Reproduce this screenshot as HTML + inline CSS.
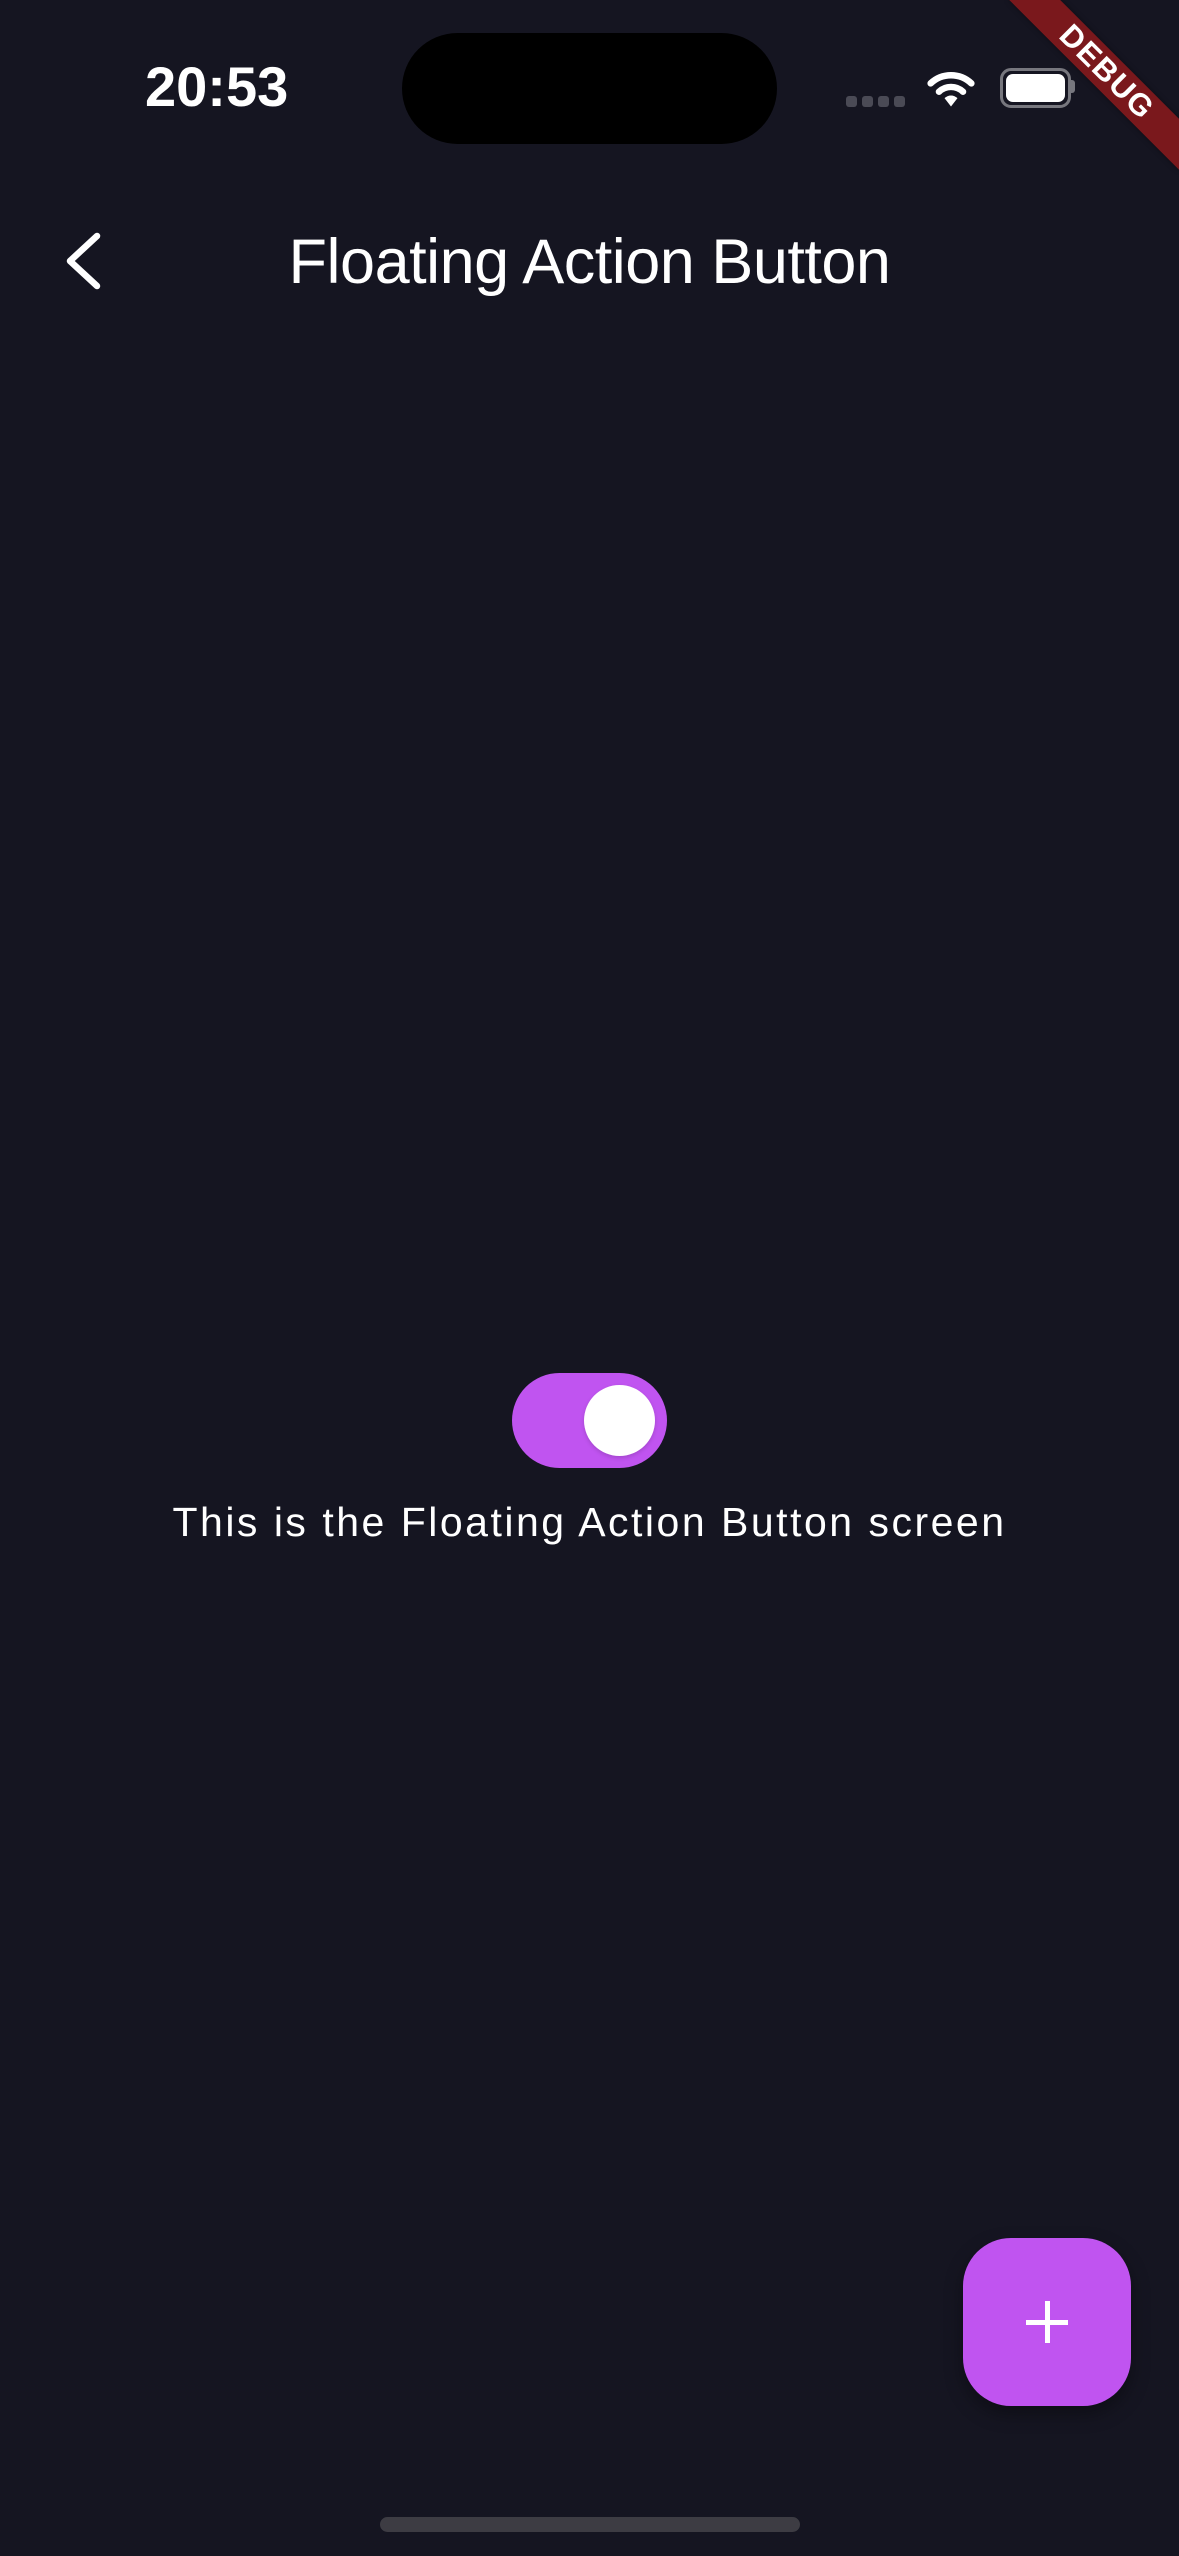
<!DOCTYPE html>
<html><head><meta charset="utf-8">
<style>
html,body{margin:0;padding:0;}
body{width:1179px;height:2556px;background:#151521;position:relative;overflow:hidden;font-family:"Liberation Sans",sans-serif;color:#fff;}
.abs{position:absolute;}
</style></head><body>
<div class="abs" style="left:145px;top:54px;width:160px;font-size:56px;font-weight:bold;letter-spacing:0px;line-height:66px;">20:53</div>
<div class="abs" style="left:402px;top:33px;width:375px;height:111px;border-radius:56px;background:#000;"></div>
<!-- signal dots -->
<div class="abs" style="left:846px;top:96px;width:11px;height:11px;border-radius:3px;background:#4a4a55;"></div>
<div class="abs" style="left:862px;top:96px;width:11px;height:11px;border-radius:3px;background:#4a4a55;"></div>
<div class="abs" style="left:878px;top:96px;width:11px;height:11px;border-radius:3px;background:#4a4a55;"></div>
<div class="abs" style="left:894px;top:96px;width:11px;height:11px;border-radius:3px;background:#4a4a55;"></div>
<!-- wifi -->
<svg class="abs" style="left:926px;top:68px" width="50" height="40" viewBox="0 0 54 42">
<path d="M5 16 A32 32 0 0 1 49 16" stroke="#fff" stroke-width="7" fill="none" stroke-linecap="round"/>
<path d="M14 25 A19 19 0 0 1 40 25" stroke="#fff" stroke-width="7" fill="none" stroke-linecap="round"/>
<path d="M20 32 L27 41 L34 32 A10 10 0 0 0 20 32 Z" fill="#fff"/>
</svg>
<!-- battery -->
<div class="abs" style="left:1000px;top:68px;width:65px;height:34px;border:3px solid #77777e;border-radius:11px;"></div>
<div class="abs" style="left:1006px;top:74px;width:59px;height:28px;border-radius:7px;background:#fff;"></div>
<div class="abs" style="left:1071px;top:80px;width:4px;height:13px;border-radius:0 3px 3px 0;background:#77777e;"></div>
<!-- debug ribbon -->
<div class="abs" style="left:1179px;top:0;width:0;height:0;transform:rotate(45deg);transform-origin:0 0;">
<div class="abs" style="left:-120px;top:84px;width:240px;height:36px;background:#7a181c;box-shadow:0 0 6px rgba(0,0,0,0.4);color:#fff;font-weight:bold;font-size:31px;line-height:36px;text-align:center;letter-spacing:1.5px;">DEBUG</div>
</div>
<!-- back -->
<svg class="abs" style="left:60px;top:228px" width="50" height="66" viewBox="0 0 50 66">
<path d="M37 8 L10 33 L37 58" stroke="#fff" stroke-width="6.5" fill="none" stroke-linecap="round" stroke-linejoin="round"/>
</svg>
<div class="abs" style="left:0;top:224px;width:1179px;text-align:center;font-size:63px;line-height:76px;letter-spacing:-0.5px;">Floating Action Button</div>
<!-- switch -->
<div class="abs" style="left:512px;top:1373px;width:155px;height:95px;border-radius:48px;background:#c054f0;"></div>
<div class="abs" style="left:584px;top:1385px;width:71px;height:71px;border-radius:50%;background:#fff;box-shadow:0 2px 4px rgba(0,0,0,0.15);"></div>
<div class="abs" style="left:0;top:1496px;width:1179px;text-align:center;font-size:41px;line-height:52px;letter-spacing:2.5px;">This is the Floating Action Button screen</div>
<!-- FAB -->
<div class="abs" style="left:963px;top:2238px;width:168px;height:168px;border-radius:48px;background:#c054f0;box-shadow:0 8px 18px rgba(0,0,0,0.35);"></div>
<div class="abs" style="left:1026px;top:2320px;width:42px;height:5px;background:#fff;"></div>
<div class="abs" style="left:1045px;top:2301px;width:5px;height:42px;background:#fff;"></div>
<!-- home -->
<div class="abs" style="left:380px;top:2517px;width:420px;height:15px;border-radius:8px;background:#3d3c43;"></div>
</body></html>
